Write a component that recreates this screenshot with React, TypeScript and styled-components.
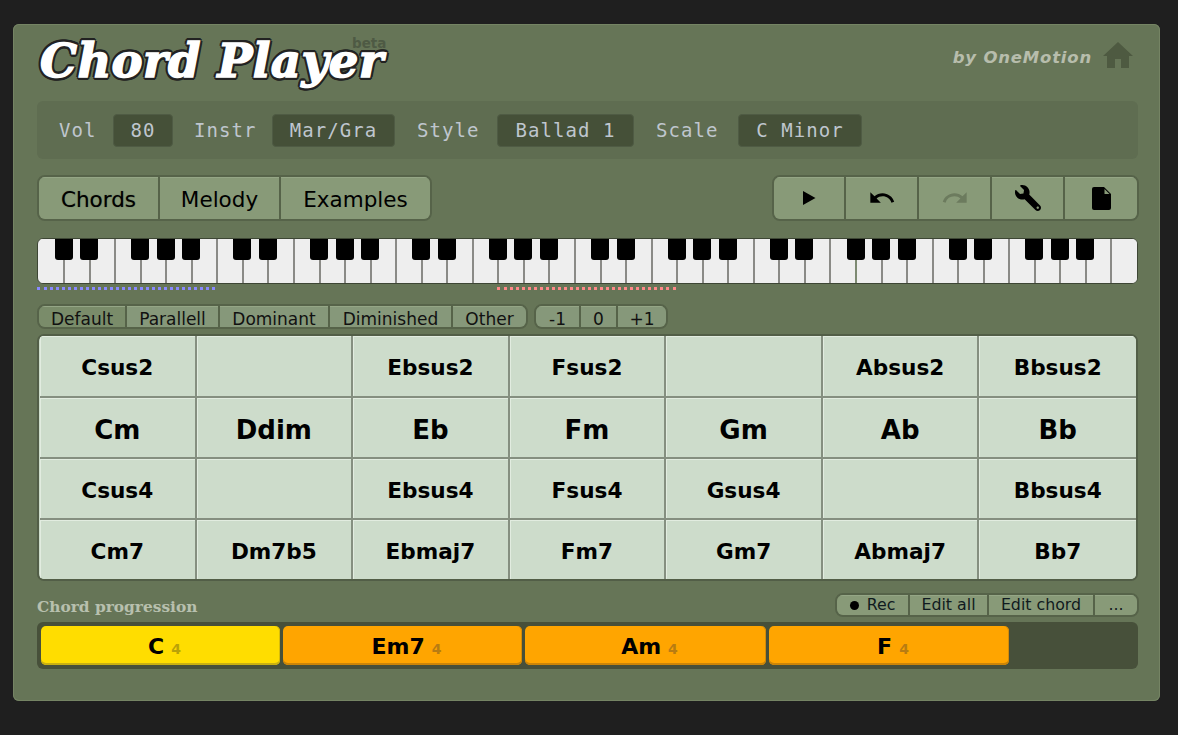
import React from "react";
import styled, { createGlobalStyle } from "styled-components";
import { FaWrench } from "react-icons/fa";
import { MdUndo, MdRedo } from "react-icons/md";

const Global = createGlobalStyle`
  html, body { margin: 0; padding: 0; background: #1f1f1f; }
  body { font-family: "DejaVu Sans", sans-serif; }
`;

const Page = styled.div`
  width: 1178px;
  height: 735px;
  padding: 24px 18px 0 13px;
  box-sizing: border-box;
`;

const Panel = styled.main`
  width: 1147px;
  height: 677px;
  box-sizing: border-box;
  padding: 0 22px 0 24px;
  background: #667557;
  border-radius: 6px;
  box-shadow: inset 0 0 0 1px #758464;
`;

const Header = styled.header`
  height: 77px;
  display: flex;
  justify-content: space-between;
  align-items: flex-start;
`;

const Logo = styled.div`
  position: relative;
  width: 350px;
  height: 77px;
`;

const LogoText = styled.h1`
  margin: 0;
  padding: 25px 0 0 3px;
  font: italic 700 46.5px/24px "DejaVu Serif", serif;
  letter-spacing: 0.4px;
  color: #fff;
  white-space: nowrap;
  -webkit-text-stroke: 1.5px #fff;
  text-shadow:
    3px 0 0 #222, -3px 0 0 #222, 0 3px 0 #222, 0 -3px 0 #222,
    2.2px 2.2px 0 #222, -2.2px 2.2px 0 #222, 2.2px -2.2px 0 #222, -2.2px -2.2px 0 #222,
    1.2px 3px 0 #222, -1.2px 3px 0 #222, 1.2px -3px 0 #222, -1.2px -3px 0 #222;
`;

const Beta = styled.span`
  position: absolute;
  left: 315px;
  top: 13px;
  font: 700 13.5px/12px "DejaVu Sans", sans-serif;
  color: #4e5a44;
`;

const Credit = styled.div`
  display: flex;
  align-items: center;
  gap: 11px;
  padding: 16px 5px 0 0;
  font: italic 700 16.5px/36px "DejaVu Sans", sans-serif;
  letter-spacing: 0.8px;
  color: #b7bdac;
`;

const HomeSvg = styled.svg`
  margin-top: -6px;
`;

const Toolbar = styled.section`
  height: 58px;
  display: flex;
  align-items: center;
  padding: 0 22px;
  background: #5f6d51;
  border-radius: 6px;
  font: 19px/24px "DejaVu Sans Mono", monospace;
  color: #bfc6ce;
  letter-spacing: 1.05px;
`;

const FieldLabel = styled.span<{ $gap: number }>`
  margin-right: ${(p) => p.$gap}px;
`;

const FieldValue = styled.span<{ $w: number; $after: number }>`
  width: ${(p) => p.$w}px;
  height: 33px;
  margin-right: ${(p) => p.$after}px;
  box-sizing: border-box;
  display: flex;
  align-items: center;
  justify-content: center;
  background: #455038;
  border: 1px solid #4f5b44;
  border-radius: 4px;
`;

const ControlRow = styled.div`
  display: flex;
  justify-content: space-between;
  margin-top: 16px;
`;

const Group = styled.div<{ $ml?: number; $mr?: number }>`
  display: flex;
  margin-left: ${(p) => p.$ml ?? 0}px;
  margin-right: ${(p) => p.$mr ?? 0}px;
  border: 2px solid #566349;
  border-radius: 8px;
  overflow: hidden;
`;

const TabButton = styled.button<{ $w: number; $active?: boolean }>`
  width: ${(p) => p.$w}px;
  height: 42px;
  padding: 3px 0 0;
  border: 0;
  border-right: 2px solid #566349;
  background: #889a78;
  box-shadow: inset 0 1px 0 #95a686;
  color: #000;
  font: 400 21.5px/38px "DejaVu Sans", sans-serif;
  text-shadow: ${(p) => (p.$active ? "0 0 1px rgba(0,0,0,0.45)" : "none")};
  &:last-child { border-right: 0; }
`;

const IconButton = styled.button<{ $w: number; $muted?: boolean }>`
  width: ${(p) => p.$w}px;
  height: 42px;
  padding: 0;
  border: 0;
  border-right: 2px solid #566349;
  background: #889a78;
  box-shadow: inset 0 1px 0 #95a686;
  color: ${(p) => (p.$muted ? "#6c7b5e" : "#000")};
  display: flex;
  align-items: center;
  justify-content: center;
  &:last-child { border-right: 0; }
`;

const Piano = styled.div`
  height: 46px;
  margin-top: 17px;
  padding-left: 1.5px;
  display: flex;
  box-sizing: border-box;
  border: 1px solid #3d4634;
  border-radius: 6px;
  overflow: hidden;
  background: #eee;
`;

const WhiteKey = styled.div<{ $marked?: boolean }>`
  position: relative;
  flex: 0 0 25.55px;
  box-sizing: border-box;
  background: #eee;
  border-right: 2px solid ${(p) => (p.$marked ? "#7d8a72" : "#8a8a86")};
  &:last-child { flex: 1; border-right: 0; }
`;

const BlackKey = styled.div`
  position: absolute;
  z-index: 1;
  top: 0;
  right: -9.5px;
  width: 18px;
  height: 21px;
  background: #000;
  border-radius: 0 0 3px 3px;
`;

const Ranges = styled.div`
  height: 20px;
  position: relative;
`;

const Range = styled.div<{ $left: number; $w: number; $c: string }>`
  position: absolute;
  top: 3px;
  left: ${(p) => p.$left}px;
  width: ${(p) => p.$w}px;
  height: 0;
  border-top: 3px dotted ${(p) => p.$c};
`;

const SmallRow = styled.div`
  display: flex;
`;

const SmallButton = styled.button<{ $w: number; $active?: boolean }>`
  width: ${(p) => p.$w}px;
  height: 21px;
  padding: 0;
  border: 0;
  border-right: 2px solid #566349;
  background: ${(p) => (p.$active ? "#7a8c6a" : "#86987a")};
  box-shadow: inset 0 1px 0 #95a686;
  color: #111;
  font: 17px/26px "DejaVu Sans", sans-serif;
  &:last-child { border-right: 0; }
`;

const Board = styled.div`
  margin-top: 5px;
  height: 247px;
  box-sizing: border-box;
  padding-left: 1px;
  border: 2px solid #525e47;
  border-radius: 7px;
  overflow: hidden;
  display: grid;
  grid-template-columns: repeat(7, 1fr);
  grid-template-rows: 62px 61px 61px 1fr;
  background: #cddccb;
`;

const Cell = styled.div<{ $big?: boolean }>`
  display: flex;
  align-items: center;
  justify-content: center;
  box-sizing: border-box;
  padding-top: 4px;
  background: #cddccb;
  border-right: 2px solid #858f80;
  border-bottom: 2px solid #858f80;
  box-shadow: inset 1px 1px 0 #e2ece0;
  color: #000;
  font: 700 ${(p) => (p.$big ? 26 : 21.6)}px/1 "DejaVu Sans", sans-serif;
  &:nth-child(7n) { border-right: 0; }
  &:nth-last-child(-n + 7) { border-bottom: 0; }
`;

const ProgressionHead = styled.div`
  height: 36px;
  display: flex;
  justify-content: space-between;
  align-items: flex-end;
`;

const ProgressionLabel = styled.div`
  font: 700 15.4px/20px "DejaVu Serif", serif;
  color: #b8c0ae;
`;

const RecButton = styled.button<{ $w: number }>`
  width: ${(p) => p.$w}px;
  height: 20px;
  padding: 0;
  border: 0;
  border-right: 2px solid #566349;
  background: #889a78;
  box-shadow: inset 0 1px 0 #95a686;
  color: #101a20;
  font: 15.8px/20px "DejaVu Sans", sans-serif;
  display: flex;
  align-items: center;
  justify-content: center;
  gap: 8px;
  &:last-child { border-right: 0; }
`;

const RecDot = styled.span`
  width: 9px;
  height: 9px;
  border-radius: 50%;
  background: #000;
`;

const Track = styled.div`
  height: 47px;
  margin-top: 5px;
  box-sizing: border-box;
  padding: 4px;
  display: flex;
  gap: 3px;
  background: #47503a;
  border-radius: 6px;
`;

const Bar = styled.div<{ $current?: boolean; $w: number }>`
  width: ${(p) => p.$w}px;
  height: 39px;
  box-sizing: border-box;
  display: flex;
  align-items: baseline;
  justify-content: center;
  gap: 7px;
  padding: 9px 0 0 8px;
  background: ${(p) => (p.$current ? "#ffdd00" : "#ffa500")};
  border-radius: 5px;
  box-shadow: inset 0 -2px 0 ${(p) => (p.$current ? "#c9b012" : "#cc8508")}, inset -1px 0 0 ${(p) => (p.$current ? "#d8bc08" : "#d58b08")};
  color: #000;
  font: 700 22px/24px "DejaVu Sans", sans-serif;
`;

const Beats = styled.span<{ $current?: boolean }>`
  font-size: 14px;
  color: ${(p) => (p.$current ? "#b9a208" : "#b87c12")};
`;

const HomeIcon = () => (
  <HomeSvg width="30" height="26" viewBox="0 0 30 26" fill="#4e5a41" aria-hidden="true">
    <path d="M15 0 L30 14 H26 V26 H18 V17 H12 V26 H4 V14 H0 Z" />
  </HomeSvg>
);

const PlayIcon = () => (
  <svg width="14" height="16" viewBox="0 0 14 16" aria-hidden="true">
    <path d="M1 1 L13.5 8 L1 15 Z" fill="currentColor" />
  </svg>
);

const FileIcon = () => (
  <svg width="19" height="23" viewBox="0 0 19 23" aria-hidden="true">
    <path
      d="M2 0 H12 L19 7 V21 A2 2 0 0 1 17 23 H2 A2 2 0 0 1 0 21 V2 A2 2 0 0 1 2 0 Z"
      fill="currentColor"
    />
    <path d="M12.5 2 L17.5 7 H12.5 Z" fill="#889a78" />
  </svg>
);

const blackAfter = [0, 1, 3, 4, 5];

const rows: { big?: boolean; cells: string[] }[] = [
  { cells: ["Csus2", "", "Ebsus2", "Fsus2", "", "Absus2", "Bbsus2"] },
  { big: true, cells: ["Cm", "Ddim", "Eb", "Fm", "Gm", "Ab", "Bb"] },
  { cells: ["Csus4", "", "Ebsus4", "Fsus4", "Gsus4", "", "Bbsus4"] },
  { cells: ["Cm7", "Dm7b5", "Ebmaj7", "Fm7", "Gm7", "Abmaj7", "Bb7"] },
];

const progression = [
  { name: "C", current: true, w: 239 },
  { name: "Em7", w: 239 },
  { name: "Am", w: 241 },
  { name: "F", w: 240 },
];

export default function App() {
  return (
    <Page>
      <Global />
      <Panel>
        <Header>
          <Logo>
            <LogoText>Chord Player</LogoText>
            <Beta>beta</Beta>
          </Logo>
          <Credit>
            by OneMotion
            <HomeIcon />
          </Credit>
        </Header>

        <Toolbar>
          <FieldLabel $gap={16.5}>Vol</FieldLabel>
          <FieldValue $w={60} $after={21}>80</FieldValue>
          <FieldLabel $gap={15.55}>Instr</FieldLabel>
          <FieldValue $w={123} $after={22}>Mar/Gra</FieldValue>
          <FieldLabel $gap={17.55}>Style</FieldLabel>
          <FieldValue $w={137} $after={22}>Ballad 1</FieldValue>
          <FieldLabel $gap={19.55}>Scale</FieldLabel>
          <FieldValue $w={124} $after={0}>C Minor</FieldValue>
        </Toolbar>

        <ControlRow>
          <Group>
            <TabButton $w={121} $active>Chords</TabButton>
            <TabButton $w={121}>Melody</TabButton>
            <TabButton $w={149}>Examples</TabButton>
          </Group>
          <Group $mr={-1}>
            <IconButton $w={72}><PlayIcon /></IconButton>
            <IconButton $w={73}><MdUndo size={28} /></IconButton>
            <IconButton $w={73} $muted><MdRedo size={28} /></IconButton>
            <IconButton $w={73}><FaWrench size={26} style={{ transform: "scaleX(-1)" }} /></IconButton>
            <IconButton $w={72}><FileIcon /></IconButton>
          </Group>
        </ControlRow>

        <Piano>
          {Array.from({ length: 43 }, (_, i) => (
            <WhiteKey key={i} $marked={i === 31}>
              {blackAfter.includes(i % 7) && i < 42 ? <BlackKey /> : null}
            </WhiteKey>
          ))}
        </Piano>

        <Ranges>
          <Range $left={0} $w={178} $c="#8888ff" />
          <Range $left={460} $w={179} $c="#ff8888" />
        </Ranges>

        <SmallRow>
          <Group>
            <SmallButton $w={88} $active>Default</SmallButton>
            <SmallButton $w={93}>Parallell</SmallButton>
            <SmallButton $w={110}>Dominant</SmallButton>
            <SmallButton $w={123}>Diminished</SmallButton>
            <SmallButton $w={73}>Other</SmallButton>
          </Group>
          <Group $ml={6}>
            <SmallButton $w={45}>-1</SmallButton>
            <SmallButton $w={37}>0</SmallButton>
            <SmallButton $w={48}>+1</SmallButton>
          </Group>
        </SmallRow>

        <Board>
          {rows.flatMap((row, r) =>
            row.cells.map((c, i) => (
              <Cell key={`${r}-${i}`} $big={row.big}>{c}</Cell>
            ))
          )}
        </Board>

        <ProgressionHead>
          <ProgressionLabel>Chord progression</ProgressionLabel>
          <Group $mr={-1}>
            <RecButton $w={73}><RecDot />Rec</RecButton>
            <RecButton $w={79}>Edit all</RecButton>
            <RecButton $w={106}>Edit chord</RecButton>
            <RecButton $w={42}>...</RecButton>
          </Group>
        </ProgressionHead>

        <Track>
          {progression.map((b) => (
            <Bar key={b.name} $current={b.current} $w={b.w}>
              {b.name}
              <Beats $current={b.current}>4</Beats>
            </Bar>
          ))}
        </Track>
      </Panel>
    </Page>
  );
}
